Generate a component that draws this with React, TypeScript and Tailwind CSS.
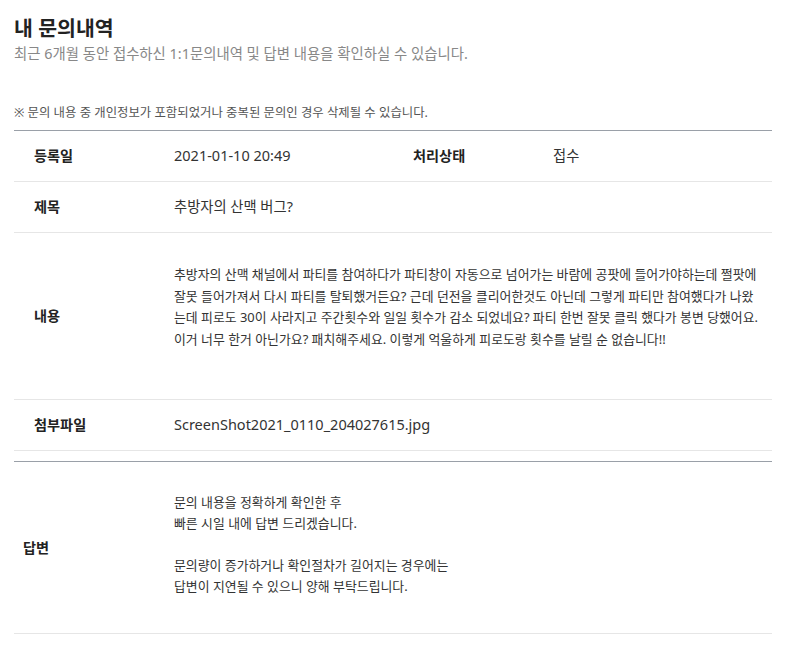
const KR = "font-['Noto_Sans','Noto_Sans_CJK_KR',sans-serif]";

const contentLines = [
  '추방자의 산맥 채널에서 파티를 참여하다가 파티창이 자동으로 넘어가는 바람에 공팟에 들어가야하는데 쩔팟에',
  '잘못 들어가져서 다시 파티를 탈퇴했거든요? 근데 던전을 클리어한것도 아닌데 그렇게 파티만 참여했다가 나왔',
  '는데 피로도 30이 사라지고 주간횟수와 일일 횟수가 감소 되었네요? 파티 한번 잘못 클릭 했다가 봉변 당했어요.',
  '이거 너무 한거 아닌가요? 패치해주세요. 이렇게 억울하게 피로도랑 횟수를 날릴 순 없습니다!!',
];

const answerLines = [
  '문의 내용을 정확하게 확인한 후',
  '빠른 시일 내에 답변 드리겠습니다.',
  '',
  '문의량이 증가하거나 확인절차가 길어지는 경우에는',
  '답변이 지연될 수 있으니 양해 부탁드립니다.',
];

function Label({ children }: { children: React.ReactNode }) {
  return (
    <div className="w-[160px] shrink-0 pl-[20px] text-[14.2px] font-bold text-[#222]">
      {children}
    </div>
  );
}

export default function App() {
  return (
    <div className={`min-h-screen bg-white ${KR}`}>
      <div className="ml-[14px] w-[758px]">
        {/* header */}
        <h1 className="pt-[14px] text-[20.5px] font-bold leading-[28px] text-[#222]">내 문의내역</h1>
        <p className="mt-[2px] text-[14.4px] leading-[20px] text-[#888]">
          최근 6개월 동안 접수하신 1:1문의내역 및 답변 내용을 확인하실 수 있습니다.
        </p>
        <p className="mt-[40px] text-[12.4px] leading-[18px] text-[#555]">
          ※ 문의 내용 중 개인정보가 포함되었거나 중복된 문의인 경우 삭제될 수 있습니다.
        </p>

        {/* inquiry table */}
        <div className="mt-[8px] border-t border-[#9aa0a8]">
          <div className="flex h-[51px] items-center border-b border-[#e6e6e6]">
            <Label>등록일</Label>
            <div className="w-[239px] shrink-0 text-[14.5px] text-[#333]">2021-01-10 20:49</div>
            <div className="w-[140px] shrink-0 text-[14.2px] font-bold text-[#222]">처리상태</div>
            <div className="text-[14.3px] text-[#333]">접수</div>
          </div>
          <div className="flex h-[51px] items-center border-b border-[#e6e6e6]">
            <Label>제목</Label>
            <div className="text-[14.3px] text-[#333]">추방자의 산맥 버그?</div>
          </div>
          <div className="flex h-[167px] items-center border-b border-[#e6e6e6]">
            <Label>내용</Label>
            <div className="self-start pt-[31px] text-[12.9px] leading-[21.5px] text-[#333]">
              {contentLines.map((l, i) => (
                <div key={i} className="whitespace-nowrap">{l}</div>
              ))}
            </div>
          </div>
          <div className="flex h-[51px] items-center border-b border-[#e6e6e6]">
            <Label>첨부파일</Label>
            <div className="text-[14.5px] text-[#333]">ScreenShot2021_0110_204027615.jpg</div>
          </div>
        </div>

        {/* answer */}
        <div className="mt-[10px] flex h-[173px] items-center border-y border-t-[#9aa0a8] border-b-[#e6e6e6]">
          <div className="w-[160px] shrink-0 pl-[9px] text-[14.2px] font-bold text-[#222]">답변</div>
          <div className="self-start pt-[30px] text-[12.9px] leading-[21px] text-[#333]">
            {answerLines.map((l, i) => (
              <div key={i} className="h-[21px] whitespace-nowrap">{l}</div>
            ))}
          </div>
        </div>
      </div>
    </div>
  );
}
